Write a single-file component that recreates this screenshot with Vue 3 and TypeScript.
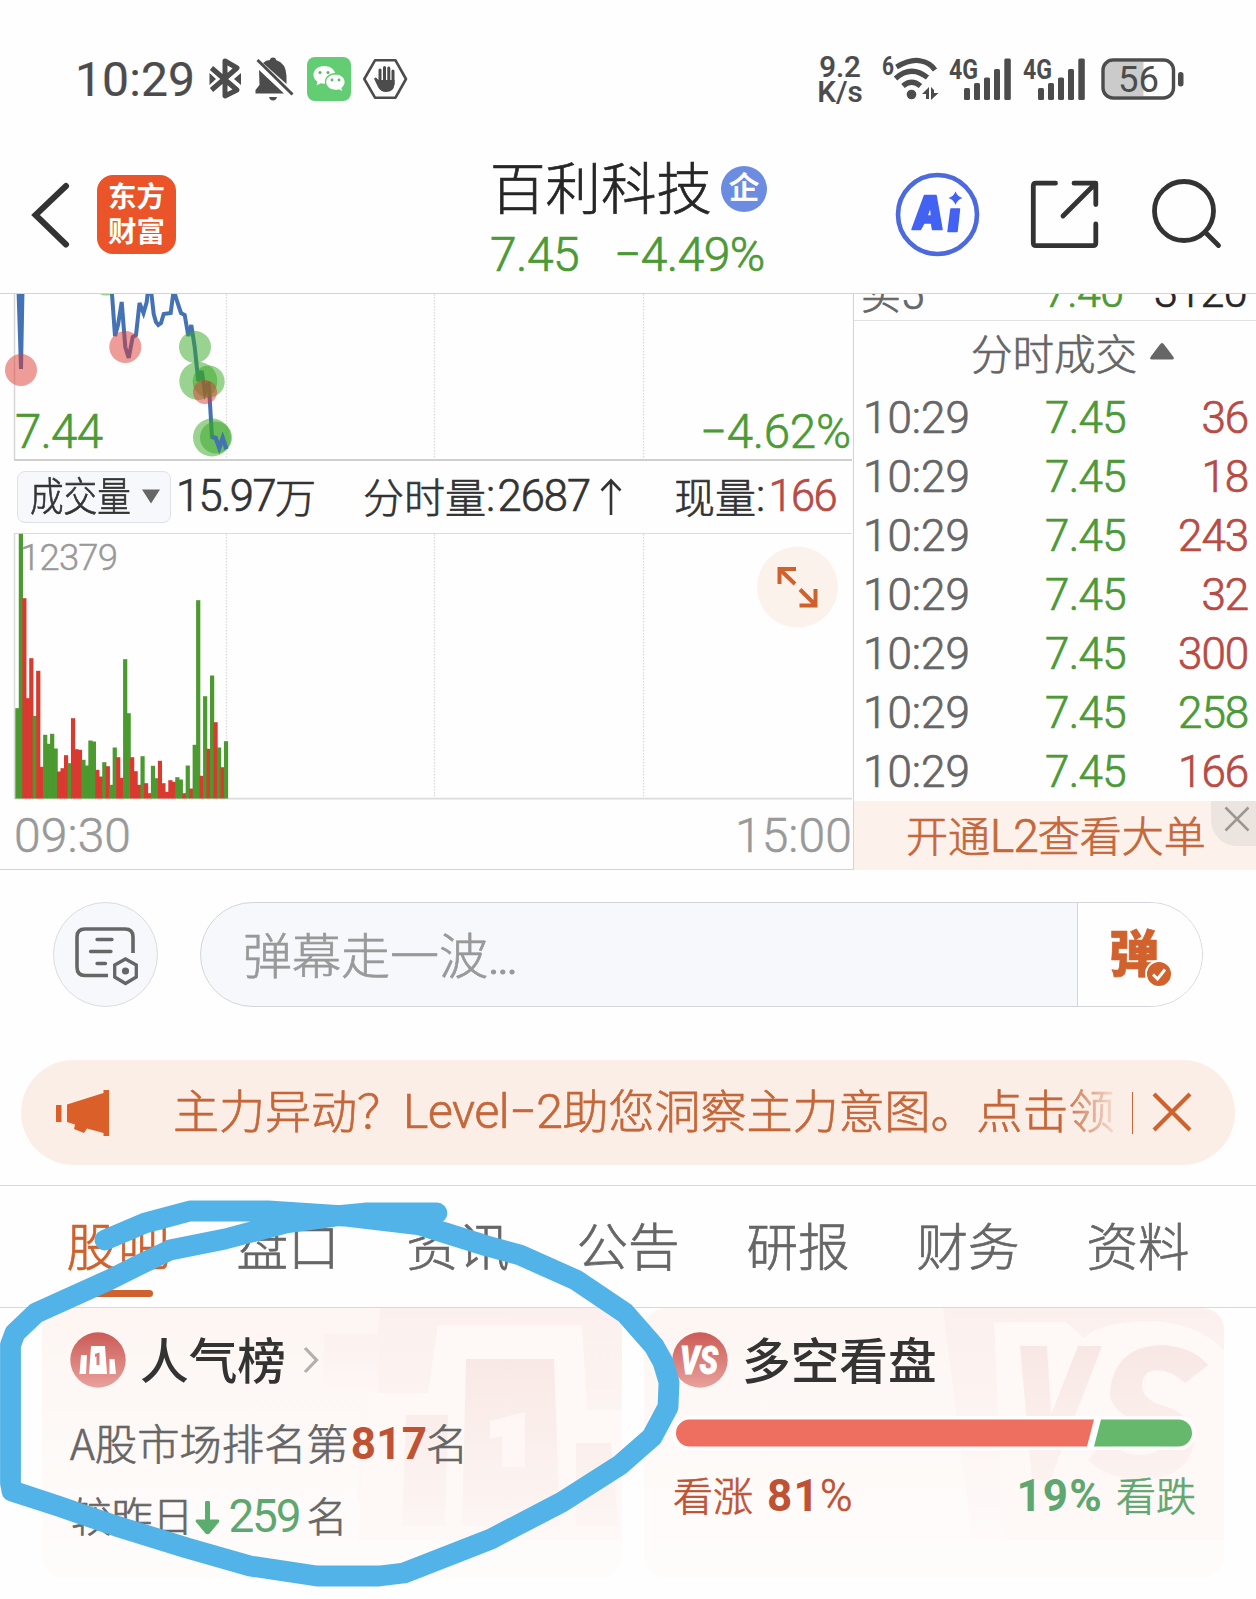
<script setup lang="ts">
interface Trade { time: string; price: string; vol: number; up: boolean }

const trades: Trade[] = [
  { time: '10:29', price: '7.45', vol: 36, up: true },
  { time: '10:29', price: '7.45', vol: 18, up: true },
  { time: '10:29', price: '7.45', vol: 243, up: true },
  { time: '10:29', price: '7.45', vol: 32, up: true },
  { time: '10:29', price: '7.45', vol: 300, up: true },
  { time: '10:29', price: '7.45', vol: 258, up: false },
  { time: '10:29', price: '7.45', vol: 166, up: true },
]

const tabs: string[] = ['股吧', '盘口', '资讯', '公告', '研报', '财务', '资料']

// Minute volume: sign gives the direction (positive = up, negative = down)
const volumes: number[] = [
  -90.3, -264.7, 200.3, 100.3, 140.3, -82.7, 127.7, 31.7, -63.7, -54.7, -64.7, -50,
  27, 30.3, 43.3, -35.3, 80.3, 49.3, 48.7, -38.7, -33, -58, -57, 28.7, 22, -36.3, 32.3,
  -13.7, -51, 41.3, 20.7, -139.3, -85.3, 41.3, 27.3, 13.7, -42.3, 15.3, 5.3, -32.7,
  -20.3, 37.7, 15.3, 6.7, 18.3, 16.7, -21.3, -19, 5.3, -33, 10, -53.7, -198.3, 22.7,
  -102.3, 49.7, -123, 76.3, -51, 31.3, -57.3,
]
const bars = volumes.map((v, i) => ({
  x: 15.3 + i * 3.477,
  y: 265.5 - Math.abs(v),
  h: Math.abs(v),
  fill: v > 0 ? '#d93a30' : '#4b9a2f',
}))
</script>

<template>
  <div class="screen">
    <div class="status">
      <span class="clock">10:29</span>
      <svg class="s-left" width="204" height="50" viewBox="206 53 204 50">
        <g fill="none" stroke="#4c4c4c" stroke-width="5" stroke-linejoin="round" stroke-linecap="butt">
          <path d="M211.500 68 L237 90 L225 96 V61 L237 68 L211.500 90" />
        </g>
        <path d="M209.500 73 L216 79 L209.500 85z M241 73 L234 79 L241 85z" fill="#4c4c4c" />
        <path d="M259 70 L284 93.500 H255.500 V90 L259.500 85z M263 63 Q266 60 270 60 Q270 57.500 273 57.500 Q276 57.500 276 60 Q286 63 286.500 76 V84z" fill="#4c4c4c" />
        <path d="M257.500 60 L292.500 94.500" stroke="#4c4c4c" stroke-width="3" />
        <path d="M269 97 H277 Q276 100.500 273 100.500 Q270 100.500 269 97z" fill="#4c4c4c" />
        <rect x="307" y="57" width="44" height="44" rx="8" fill="#62cd72" />
        <path d="M324 66 c-6 0-10.500 3.800-10.500 8.800 0 3 1.500 5.400 4 7 l-1 3.700 4.200-2.200 q2.300.6 4.300.4 c-1-6.500 4-10.700 10-10.700 -.8-4.200-5.300-7-11-7z" fill="#fff" />
        <path d="M335.500 74.500 c-5.200 0-9.300 3.300-9.300 7.600 0 4.400 4.100 7.700 9.300 7.700 q1.800 0 3.400-.5 l3.300 1.700 -.9-3 c2-1.500 3.300-3.400 3.300-5.900 0-4.300-4.100-7.600-9.100-7.600z" fill="#fff" />
        <g fill="#57b866"><circle cx="320" cy="72.500" r="1.500" /><circle cx="328" cy="72.500" r="1.500" /><circle cx="332" cy="80" r="1.400" /><circle cx="339" cy="80" r="1.400" /></g>
        <path d="M375 60.300 H395.500 L406 79 L395.500 97.700 H375 L364.300 79z" fill="none" stroke="#4c4c4c" stroke-width="2.600" stroke-linejoin="round" />
        <path d="M380 83 V70 M384.500 83 V67.500 M388.800 83 V68 M393 84 V71" stroke="#4c4c4c" stroke-width="3" stroke-linecap="round" />
        <path d="M378.600 80 H394.500 V84 Q394 92 386 92 Q380.500 92 378 87 L374.200 79 Q374.500 76.500 376.500 78z" fill="#4c4c4c" />
      </svg>
      <div class="speed"><span>9.2</span><span>K/s</span></div>
      <svg class="s-right" width="310" height="50" viewBox="880 53 310 50">
        <g fill="#4c4c4c" font-family="Roboto, sans-serif" font-weight="700">
          <text x="882" y="75" font-size="25" textLength="12" lengthAdjust="spacingAndGlyphs">6</text>
          <text x="949" y="79" font-size="28" textLength="29" lengthAdjust="spacingAndGlyphs">4G</text>
          <text x="1023" y="79" font-size="28" textLength="29" lengthAdjust="spacingAndGlyphs">4G</text>
        </g>
        <g fill="none" stroke="#4c4c4c" stroke-width="5.200">
          <path d="M896.500 67 Q911 58.500 921 61 Q930 62.500 935 70" />
          <path d="M895.500 78.500 Q911 64.500 927.500 77.500" />
          <path d="M903 86 Q911.500 78.500 920.500 86" />
        </g>
        <circle cx="911.500" cy="94.500" r="4.800" fill="#4c4c4c" />
        <path d="M922 94 L929 87 V99 H926 V94z M931 87 L934 90 V93 L938.500 93 L931 100z" fill="#4c4c4c" />
        <g v-for="o in [0, 74]" :key="o" :transform="`translate(${o} 0)`" fill="#4c4c4c">
          <rect x="964" y="88" width="6" height="12" rx="1.500" />
          <rect x="974" y="83" width="6" height="17" rx="1.500" />
          <rect x="984" y="77.500" width="6" height="22.500" rx="1.500" />
          <rect x="994" y="69" width="6" height="31" rx="1.500" />
          <rect x="1004.300" y="58.500" width="6.500" height="41.500" rx="1.500" />
        </g>
        <path d="M1112 62 H1143.500 V96 H1112 Q1104 96 1104 88 V70 Q1104 62 1112 62z" fill="#cbcbcb" />
        <rect x="1103" y="60" width="70.500" height="38" rx="10" fill="none" stroke="#4c4c4c" stroke-width="3.400" />
        <rect x="1178" y="72" width="5.500" height="14.500" rx="2.700" fill="#4c4c4c" />
        <text x="1118" y="91.500" font-family="Roboto, sans-serif" font-weight="400" font-size="36.500" textLength="41" fill="#4c4c4c">56</text>
      </svg>
    </div>

    <header class="head">
      <svg class="back" width="42" height="70" viewBox="30 180 42 70"><path d="M66 186 L35.500 215 L66 244.500" fill="none" stroke="#333" stroke-width="6" stroke-linecap="round" stroke-linejoin="miter" /></svg>
      <div class="logo"><span>东方</span><span>财富</span></div>
      <div class="title">
        <div class="name"><span>百利科技</span><i class="corp">企</i></div>
        <div class="quote"><span>7.45</span><span>−4.49%</span></div>
      </div>
      <svg class="tools" width="340" height="90" viewBox="890 170 340 90">
        <circle cx="937.500" cy="214.500" r="39.500" fill="none" stroke="#4c69de" stroke-width="4.600" />
        <path fill="#4262f3" fill-rule="evenodd" stroke="#4262f3" stroke-width="1.500" stroke-linejoin="round" d="M924.500 195.500 H936 L942 229.500 H932.500 L931.500 223 H924 L920.500 229.500 H912 z M930.500 206 L927 216 H931.500z" />
        <path fill="#4262f3" stroke="#4262f3" stroke-width="1.500" stroke-linejoin="round" d="M951 209 H959.500 L957 231.500 H948z" />
        <path fill="#4262f3" d="M955.500 191.500 Q957.500 196.500 962.500 198 Q957.500 199.500 955.500 205 Q953.500 199.500 948.500 198 Q953.500 196.500 955.500 191.500z" />
        <g fill="none" stroke="#333" stroke-width="4.800" stroke-linecap="round" stroke-linejoin="round">
          <path d="M1055.500 183.200 H1036 Q1033.300 183.200 1033.300 186 V243 Q1033.300 245.700 1036 245.700 H1093 Q1095.800 245.700 1095.800 243 V224" />
          <path d="M1074 183.200 H1095.800 V204.500 M1094 185 L1063 216" />
          <circle cx="1184" cy="211" r="29.500" />
          <path d="M1205 232 L1218.500 245.500" />
        </g>
      </svg>
    </header>

    <main class="market">
      <section class="charts">
        <svg class="price-chart" width="853" height="168" viewBox="0 294 853 168">
          <path d="M14.500 294 V460" stroke="#d6d6d6" stroke-width="1.500" />
          <path d="M226.500 294 V459 M434.500 294 V459 M643.500 294 V459" stroke="#dadada" stroke-width="1.300" stroke-dasharray="1.500 1.500" />
          <path d="M14 460 H852" stroke="#cfcfcf" stroke-width="2" />
          <path d="M18.500 290 L21 369 L22.500 290" stroke="#4472b5" stroke-width="4" fill="none" />
          <polyline fill="none" stroke="#4472b5" stroke-width="4" points="111.700,290 115,336 118,325 121.700,302 125.300,347 128.700,358 132.700,337 136,335 139.500,303 143.500,313 146.700,302 148,290 151,290 153.700,314 156,322 158.300,325 161,323 163.700,314 170.700,313 173.700,290 177.300,302 181,313 184.700,315 188.300,336 191.300,325 194.700,347 198.300,381 201.700,371 205,392 208.700,382 212,437 215.700,438 219.300,448 222.700,438 226.500,449" />
          <g fill="#db3a32" fill-opacity=".5"><circle cx="21" cy="370" r="16" /><circle cx="125.300" cy="347" r="16" /></g>
          <g fill="#35a522" fill-opacity=".5">
            <circle cx="106.500" cy="279.500" r="16" /><circle cx="195" cy="347" r="16" /><circle cx="198.300" cy="381" r="19" /><circle cx="208.700" cy="381.500" r="16" />
          </g>
          <circle cx="205" cy="392" r="12" fill="#db3a32" fill-opacity=".5" />
          <g fill="#35a522" fill-opacity=".5"><circle cx="212" cy="437.500" r="19" /><circle cx="216" cy="437.500" r="16" /></g>
          <path d="M212 437 L215.700 438 L219.300 448 L222.700 438 L226.500 449" fill="none" stroke="#4472b5" stroke-width="4" />
          <g fill="#4b9a35" font-family="Roboto, sans-serif" font-weight="300" stroke="#4b9a35" stroke-width=".6" font-size="47.500">
            <text x="15" y="447.500" textLength="88">7.44</text>
            <text x="700" y="447.500" textLength="151">−4.62%</text>
          </g>
        </svg>
        <div class="vol-head">
          <span class="chip"><b>成交量</b><svg width="18" height="15"><path d="M0 .5H18L9 14.500z" fill="#666" /></svg></span>
          <span class="v1">15.97<em>万</em></span>
          <span class="v2"><em>分时量</em>:<u>2687</u><svg width="24" height="38" viewBox="0 0 24 38"><path d="M12 37 V3 M2.500 12.500 L12 2.500 L21.500 12.500" fill="none" stroke="#333" stroke-width="2.600" /></svg></span>
          <span class="v3"><em>现量</em>:<u>166</u></span>
        </div>
        <svg class="vol-chart" width="853" height="268" viewBox="0 0 853 268">
          <path d="M14 .5 H852" stroke="#dcdcdc" stroke-width="1.200" />
          <path d="M14.500 0 V266" stroke="#dcdcdc" stroke-width="1.500" />
          <path d="M226.500 1 V265 M434.500 1 V265 M643.500 1 V265" stroke="#dadada" stroke-width="1.300" stroke-dasharray="1.500 1.500" />
          <path d="M14 265.700 H852" stroke="#dcdcdc" stroke-width="1.800" />
          <rect v-for="(b, i) in bars" :key="i" :x="b.x" :y="b.y" width="4.200" :height="b.h" :fill="b.fill" />
          <text x="20" y="37" font-family="Roboto, sans-serif" font-weight="300" stroke="#999" stroke-width=".4" font-size="36.500" fill="#999" textLength="98">12379</text>
          <circle cx="797.500" cy="54" r="40.500" fill="#fcf2ec" />
          <path d="M779.500 51 V36 H796 M780.500 37 L795 51 M800 56.500 L815 71.500 M799.500 72.500 H815.500 V56" fill="none" stroke="#cf612c" stroke-width="4" />
        </svg>
        <div class="axis"><span>09:30</span><span>15:00</span></div>
      </section>

      <aside class="tape">
        <div class="bid"><div class="bid-row"><span class="lbl"><em>买</em>5</span><span class="p">7.40</span><span class="q">3120</span></div></div>
        <div class="tape-title"><span>分时成交</span><svg width="24" height="17"><path d="M12 0 Q13 0 14.500 2 L23.500 14 Q24.500 16.500 22 16.500 H2 Q-.5 16.500 .5 14 L9.500 2 Q11 0 12 0z" fill="#666" /></svg></div>
        <div v-for="(t, i) in trades" :key="i" class="trade">
          <span class="time">{{ t.time }}</span>
          <span class="price">{{ t.price }}</span>
          <span class="vol" :class="{ up: t.up }">{{ t.vol }}</span>
        </div>
        <div class="l2">
          <span>开通<i>L2</i>查看大单</span>
          <div class="l2-close"><svg width="26" height="26"><path d="M1.500 1.500 L24.500 24.500 M24.500 1.500 L1.500 24.500" stroke="#9c9692" stroke-width="2.500" /></svg></div>
        </div>
      </aside>
    </main>

    <div class="chat">
      <div class="round">
        <svg width="66" height="66" viewBox="74 923 66 66">
          <g fill="none" stroke="#666" stroke-width="3.600">
            <path d="M109 976.500 H86 Q78 976.500 78 968 V938 Q78 930 86 930 H126 Q134 930 134 938 V954" />
            <path d="M98 940.500 H113 M91.500 952.500 H112 M98 964.500 H106.500" stroke-linecap="round" stroke-width="3.300" />
            <path d="M126.500 960 L137.300 966 V978 L126.500 984.500 L115.700 978 V966z" stroke-width="3.300" />
          </g>
          <circle cx="126.500" cy="972" r="3.600" fill="#666" />
        </svg>
      </div>
      <div class="input">
        <span class="ph">弹幕走一波<i>...</i></span>
        <div class="dan">
          <b>弹</b>
          <svg width="28" height="28"><circle cx="14" cy="14" r="13" fill="#d2622d" stroke="#fff" stroke-width="2" /><path d="M8 14.500 L12.500 19 L20 9.500" fill="none" stroke="#fff" stroke-width="3" /></svg>
        </div>
      </div>
    </div>

    <div class="promo">
      <svg class="horn" width="56" height="50" viewBox="55 1087 56 50"><path fill="#da5f28" d="M56 1104 H61.500 V1121 H56z M67 1103.500 L103.500 1092 V1089 H109 V1135 H103.500 V1132 L87 1127.500 L84 1132 L74 1128 L75 1123.500 L67 1121z" /></svg>
      <div class="promo-text"><span>主力异动？</span><i>Level<s>−</s>2</i><span>助您洞察主力意图。点击领</span></div>
      <div class="bar"></div>
      <svg class="px" width="40" height="40"><path d="M2 2 L38 38 M38 2 L2 38" stroke="#cf6330" stroke-width="4.200" /></svg>
    </div>

    <nav class="tabs">
      <div v-for="(t, i) in tabs" :key="t" class="tab" :class="{ on: i === 0 }">{{ t }}</div>
    </nav>

    <div class="cards">
      <article class="card">
        <svg class="mark" width="580" height="270" viewBox="42 1308 580 270">
          <defs>
            <linearGradient id="fade" x1="0" y1="1308" x2="0" y2="1540" gradientUnits="userSpaceOnUse"><stop offset="0" stop-color="#fbf0ed" /><stop offset="1" stop-color="#fefaf9" /></linearGradient>
            <linearGradient id="block" x1="0" y1="1350" x2="0" y2="1530" gradientUnits="userSpaceOnUse"><stop offset="0" stop-color="#f8e8e5" /><stop offset="1" stop-color="#fdf6f4" /></linearGradient>
            <linearGradient id="left" x1="0" y1="1334" x2="0" y2="1393" gradientUnits="userSpaceOnUse"><stop offset="0" stop-color="#fcf2f0" /><stop offset="1" stop-color="#fdf7f5" /></linearGradient>
          </defs>
          <path fill="url(#left)" d="M324 1334 H400 V1500 H358 L362 1393 L322 1393z" />
          <path fill="url(#fade)" d="M378 1334 L380 1308 H622 V1540 H380z" />
          <path fill="#fef9f7" d="M438 1325 H582 L587 1410 H622 V1540 H358 L368 1393 H428z" />
          <path fill="url(#block)" d="M466 1359 H554 L560 1526 H462z M406 1415 H448 L445 1526 H402z M576 1443 H611 L619 1526 H576z" />
          <path fill="#fef7f5" d="M490 1421 L525 1412 V1467 H502 V1436 L490 1439z" />
        </svg>
        <h3>
          <svg width="56" height="56" viewBox="0 0 56 56"><defs><linearGradient id="badge" x1="0" y1="0" x2="0" y2="1"><stop offset="0" stop-color="#cb5b56" /><stop offset="1" stop-color="#e9a19c" /></linearGradient></defs>
            <circle cx="28" cy="28" r="27.700" fill="url(#badge)" />
            <path fill="#fff" fill-rule="evenodd" d="M21 14 H35 L37 42 H19z M11 23 H17 L16 42 H9.500z M39.500 27 H44.500 L46 42 H39.500z M25 22 L29.500 20.500 V33 H26.500 V24.500 L25 25z" /></svg>
          <span>人气榜</span>
          <svg class="chev" width="16" height="28"><path d="M2 2 L13.500 14 L2 26" fill="none" stroke="#b4aeac" stroke-width="3.200" /></svg>
        </h3>
        <p class="rank"><em>A股市场排名第</em><b>817</b><em>名</em></p>
        <p class="diff"><em>较昨日</em><svg width="25" height="34"><path d="M12.500 2 V22" stroke="#5aad6c" stroke-width="5" stroke-linecap="round" /><path d="M1.500 18.500 H23.500 Q25 19.500 24 21 L14.500 32.500 Q12.500 34 10.500 32.500 L1 21 Q0 19.500 1.500 18.500z" fill="#5aad6c" /></svg><b>259</b><em>名</em></p>
      </article>

      <article class="card vs">
        <svg class="mark" width="580" height="270" viewBox="644 1308 580 270">
          <path fill="url(#fade)" d="M943 1308 H1204 Q1224 1308 1224 1328 V1540 H972z" />
          <path fill="#fef8f6" d="M994 1322 H1066 L1084 1338 Q1102 1321 1150 1321 Q1196 1322 1224 1350 V1540 H1004z" />
          <g fill="url(#block)">
            <path d="M1020 1346 H1047 L1051 1415 L1078 1346 H1102 L1050 1480 L1032 1480z" />
            <path d="M1208 1365 L1185 1383 Q1172 1370 1156 1370 Q1142 1371 1142 1387 Q1143 1400 1164 1406 Q1194 1415 1194 1440 Q1190 1478 1142 1480 Q1105 1478 1088 1460 L1106 1438 Q1122 1456 1142 1455 Q1162 1454 1163 1440 Q1163 1428 1140 1422 Q1109 1412 1110 1391 Q1115 1347 1160 1345 Q1192 1346 1208 1365z" />
          </g>
        </svg>
        <h3>
          <svg width="56" height="56" viewBox="0 0 56 56"><circle cx="28" cy="28" r="27.700" fill="url(#badge)" /><text x="8" y="41.500" font-family="Roboto, sans-serif" font-size="38" font-weight="900" font-style="italic" fill="#fff" stroke="#fff" stroke-width=".8" textLength="38" lengthAdjust="spacingAndGlyphs">VS</text></svg>
          <span>多空看盘</span>
        </h3>
        <svg class="ratio" width="524" height="36" viewBox="672 1415.500 524 36">
          <rect x="672" y="1416.500" width="524" height="34" rx="17" fill="#fff" fill-opacity=".85" />
          <path d="M689.500 1420 H1094 L1087 1447 H689.500 A13.500 13.500 0 0 1 689.500 1420z" fill="#ee6f60" />
          <path d="M1101 1420 H1178.500 A13.500 13.500 0 0 1 1178.500 1447 H1094z" fill="#66b96c" />
        </svg>
        <p class="sent"><span class="bull"><em>看涨</em><b>81</b>%</span><span class="bear"><b>19%</b><em>看跌</em></span></p>
      </article>
    </div>

    <svg class="scribble" width="1256" height="450" viewBox="0 1149 1256 450">
      <path fill="none" stroke="#52b3e8" stroke-width="20.800" stroke-linecap="round" stroke-linejoin="round" d="M105 1240 L145 1223 L190 1211 L268 1211 L344 1216 L420 1225 L487 1246 L520 1255 L576 1280 L625 1313 L654 1346 L663 1362 L669 1382 L668 1407 L652 1437 L620 1465 L562 1502 L491 1539 L404 1573 L379 1576 L317 1576 L250 1566 L187 1548 L116 1526 L58 1506 L12 1491 L10.500 1483 V1345 L15 1333 L36 1313 L109 1280 L141 1264 L170 1250 L225 1239 L286 1223 L344 1215 L365 1213 H437" />
    </svg>
  </div>
</template>

<style>
body { background: #fefefe; }
</style>

<style scoped>
.screen {
  position: relative;
  width: 1256px;
  height: 1599px;
  overflow: hidden;
  background: #fefefe;
  font-family: Roboto, "Noto Sans CJK SC", sans-serif;
  font-weight: 300;
  color: #333;
  -webkit-text-stroke-width: .7px;
}
svg { display: block; flex: none; -webkit-text-stroke-width: 0; }
em, i { font-style: normal; }
u, s { text-decoration: none; }
em { font-family: "Noto Sans CJK SC", sans-serif; }
p, h3 { margin: 0; }

.status { display: flex; height: 155px; padding-top: 53px; box-sizing: border-box; color: #4c4c4c; -webkit-text-stroke-width: .2px; }
.clock { width: 130px; margin-left: 75px; font-size: 48px; line-height: 54px; font-weight: 400; letter-spacing: .1px; }
.s-left { margin-left: 1px; }
.speed { display: flex; flex-direction: column; width: 62px; margin: 2px 0 0 399px; font-size: 29.500px; line-height: 24.500px; font-weight: 500; align-items: center; white-space: nowrap; }
.s-right { margin-left: 9px; }

.head { display: flex; height: 139px; box-sizing: border-box; border-bottom: 1.500px solid #d4d4d4; }
.back { margin: 25px 0 0 30px; }
.logo { display: flex; flex-direction: column; align-items: center; width: 79px; height: 79px; margin: 20px 0 0 25px; border-radius: 16px; background: #ea5428; color: #fff; font: 700 28.500px/34.500px "Noto Sans CJK SC", sans-serif; padding-top: 3px; box-sizing: border-box; -webkit-text-stroke-width: 0; }
.title { width: 287px; margin-left: 315px; }
.name { display: flex; align-items: center; height: 66px; padding-top: 1px; font-size: 55.500px; line-height: 66px; color: #262626; white-space: nowrap; }
.name > span { width: 222px; margin: 4px 0 0 -1px; }
.corp { width: 46px; height: 46px; margin: 0 0 0 9px; border-radius: 50%; background: #6c8ce2; color: #fff; font-size: 30px; line-height: 44px; font-weight: 500; text-align: center; }
.quote { display: flex; height: 58px; font-size: 48px; line-height: 65px; color: #4b9a35; letter-spacing: -.6px; white-space: nowrap; }
.quote span:first-child { width: 124px; margin-left: -1px; }
.tools { margin: 15px 0 0 112px; }

.market { display: flex; height: 576px; border-bottom: 1.500px solid #d4d4d4; box-sizing: border-box; }
.charts { width: 853px; }
.vol-head { display: flex; align-items: center; height: 71px; padding-bottom: 2px; box-sizing: border-box; font-size: 43.500px; line-height: 60px; letter-spacing: -1.600px; white-space: nowrap; }
.vol-head em { font-size: 41px; letter-spacing: 0; margin-top: -5px; }
.vol-head span { display: flex; align-items: center; padding-top: 1px; }
.vol-head .chip { justify-content: space-between; width: 154px; height: 52px; margin-left: 17px; padding: 0 12px; box-sizing: border-box; border: 1px solid #dfe2ea; border-radius: 8px; background: #f7f8fb; }
.chip b { font: 300 40px/50px "Noto Sans CJK SC", sans-serif; letter-spacing: 0; width: 99px; margin-top: -5px; transform: scaleX(.84); transform-origin: 0 50%; }
.chip svg { margin-right: -2px; }
.v1 { width: 187px; margin-left: 5px; }
.v2 { width: 311px; }
.v2 u { margin-left: 4px; letter-spacing: -1px; }
.v2 svg { margin-left: 9px; }
.v3 u { margin-left: 5px; color: #b84b43; }
.axis { display: flex; justify-content: space-between; height: 68px; padding: 0 1px 0 14px; font-size: 48px; line-height: 70px; color: #999; letter-spacing: .1px; -webkit-text-stroke-width: .5px; }

.tape { flex: 1; border-left: 1px solid #d4d4d4; }
.bid { height: 26px; overflow: hidden; border-bottom: 1px solid #e2e2e2; }
.bid-row { display: flex; justify-content: space-between; height: 60px; margin-top: -32px; padding: 0 9px 0 7px; font-size: 43px; line-height: 60px; letter-spacing: -.6px; color: #666; }
.bid-row em { font-size: 40px; }
.bid-row .p { margin-left: 90px; color: #4b9a35; }
.bid-row .q { color: #262626; }
.tape-title { display: flex; align-items: center; height: 67px; padding-left: 117px; font-size: 41.500px; line-height: 66px; color: #666; }
.tape-title > span { padding-top: 3px; }
.tape-title svg { margin: -7px 0 0 13px; }
.trade { display: flex; height: 59px; padding: 1px 8px 0 9px; box-sizing: border-box; font-size: 44px; line-height: 59px; letter-spacing: -1.100px; color: #666; }
.trade .time { width: 182px; letter-spacing: 0; }
.trade .price { flex: 1; color: #4b9a35; letter-spacing: -.7px; }
.trade .vol { color: #4b9a35; }
.trade .vol.up { color: #b84b43; }
.l2 { display: flex; justify-content: space-between; height: 69px; background: #fcf2eb; color: #c5673a; font-size: 42px; line-height: 70px; }
.l2 > span { padding-left: 52px; white-space: nowrap; }
.l2 i { font-size: 46px; letter-spacing: -1px; }
.l2-close { display: flex; justify-content: center; align-items: center; width: 45px; height: 45px; border-bottom-left-radius: 26px; background: #ebe4df; }
.l2-close svg { margin: -9px 0 0 6px; }

.chat { display: flex; height: 190px; padding: 32px 0 0 53px; box-sizing: border-box; }
.round { display: flex; align-items: center; justify-content: center; width: 105px; height: 105px; box-sizing: border-box; border: 1.500px solid #dadce3; border-radius: 50%; background: #f7f8fb; }
.input { display: flex; justify-content: space-between; width: 1003px; height: 105px; margin-left: 42px; box-sizing: border-box; overflow: hidden; border: 1.500px solid #d3d5da; border-radius: 53px; background: #f7f8fb; }
.ph { padding: 4px 0 0 42px; font-size: 49px; line-height: 102px; color: #999; }
.ph i { letter-spacing: -2.500px; -webkit-text-stroke-width: 1.200px; }
.dan { position: relative; width: 124px; border-left: 1.500px solid #d3d5da; background: #fefefe; color: #d2622d; }
.dan b { display: block; padding-left: 31px; font: 900 50px/95px "Noto Sans CJK SC", sans-serif; }
.dan svg { position: absolute; left: 67px; top: 57px; }

.promo { display: flex; align-items: center; width: 1214px; height: 105px; margin-left: 21px; border-radius: 53px; background: #fbeee6; color: #c5673a; }
.horn { margin-left: 34px; }
.promo-text { display: flex; width: 938px; margin: -1px 0 0 62px; padding-right: 2px; overflow: hidden; font-size: 46px; line-height: 100px; white-space: nowrap; -webkit-mask-image: linear-gradient(90deg, #000 94.500%, transparent 101%); mask-image: linear-gradient(90deg, #000 94.500%, transparent 101%); }
.promo-text i { width: 166px; font-size: 48px; letter-spacing: -.4px; }
.bar { width: 1px; height: 42px; margin-left: 19px; background: #c5673a; }
.px { margin: -2px 0 0 19px; }

.tabs { display: flex; height: 123px; margin-top: 20px; padding-left: 33px; box-sizing: border-box; border-top: 1.500px solid #d8d8d8; border-bottom: 1.500px solid #d8d8d8; }
.tab { display: flex; flex-direction: column; align-items: center; width: 170px; font-size: 51.500px; line-height: 126px; color: #666; }
.tab.on { color: #cf612c; }
.tab.on::after { content: ""; width: 70px; height: 7px; margin-top: -22px; border-radius: 4px; background: #cf612c; }

.cards { display: flex; gap: 22px; padding-left: 42px; }
.card { position: relative; width: 580px; height: 270px; border-radius: 0 0 22px 22px; background: linear-gradient(#fdf6f3, #fefcfb 90%); overflow: hidden; }
.card.vs { border-radius: 22px; }
.mark { position: absolute; left: 0; top: 0; }
.card h3 { position: relative; display: flex; align-items: center; height: 56px; margin: 24px 0 0 28px; font: 500 48.700px/56px "Noto Sans CJK SC", sans-serif; -webkit-text-stroke-width: 0; }
.card h3 span { margin: -4px 0 0 14px; }
.chev { margin-left: 17px; }
.card p { position: relative; display: flex; align-items: center; height: 60px; line-height: 60px; font-size: 42.300px; color: #666; white-space: nowrap; }
.card p em { margin-top: -5px; }
.card p b { -webkit-text-stroke-width: 0; }
.rank { margin: 26px 0 0 28px; }
.rank b { width: 75px; margin-left: 2px; font-size: 44px; font-weight: 700; color: #c05234; letter-spacing: .3px; }
.diff { margin: 12px 0 0 29px; }
.card .diff em { font-size: 40.800px; margin-top: -3px; }
.diff svg { margin: 4px 8px 0 2px; }
.card .diff b { width: 78px; font-size: 46px; font-weight: 400; color: #5fa770; letter-spacing: -2.200px; }
.vs .ratio { position: relative; margin: 27px 0 0 28px; }
.vs .sent { justify-content: space-between; margin: 15px 28px 0 29px; }
.sent span { display: flex; font-size: 44px; }
.card .sent em { font-size: 40px; margin-top: -2px; }
.sent b { font-weight: 700; letter-spacing: 1.200px; }
.bull { color: #c05234; }
.bull em { margin-right: 14px; }
.bear { color: #5fa770; }
.bear em { margin-left: 13px; }

.scribble { position: absolute; left: 0; bottom: 0; }
</style>
